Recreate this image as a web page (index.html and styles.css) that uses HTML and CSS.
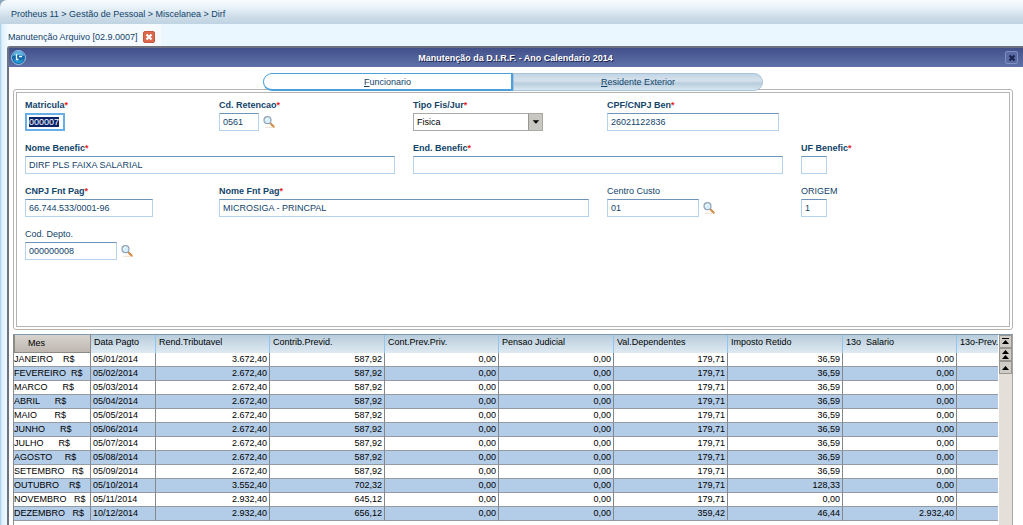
FILE: index.html
```html
<!DOCTYPE html>
<html lang="pt-BR">
<head>
<meta charset="utf-8">
<title>Manutenção da D.I.R.F.</title>
<link rel="stylesheet" href="styles.css">
</head>
<body>
<svg class="defs" aria-hidden="true">
  <symbol id="lens" viewBox="0 0 12 12">
    <path d="M2 11.300h7" stroke="#f0ddd0" stroke-width="1"/>
    <path d="M7 7l3.700 3.700" stroke="#e2954a" stroke-width="2.200" stroke-linecap="round"/>
    <path d="M8 7.200l3 3" stroke="#8a6f5a" stroke-width=".5"/>
    <circle cx="4.500" cy="4.200" r="3.500" fill="#d5effc" stroke="#93a5b5" stroke-width="1.200"/>
    <path d="M2.800 4a2 2 0 0 1 2-1.800" fill="none" stroke="#fff" stroke-width="1"/>
  </symbol>
</svg>
<header class="crumbs">Protheus 11 &gt; Gestão de Pessoal &gt; Miscelanea &gt; Dirf</header>
<div class="desktop">
  <div class="doc-tab">
    <span>Manutenção Arquivo [02.9.0007]</span>
    <button class="doc-close" aria-label="Fechar aba"><svg viewBox="0 0 12 12"><path d="M3.500 3.500l5 5M8.500 3.500l-5 5" stroke="#fff" stroke-width="2.200"/></svg></button>
  </div>
  <main class="window">
    <div class="titlebar">
      <svg class="logo" viewBox="0 0 15 15"><circle cx="7.500" cy="7.500" r="7" fill="#1669a8" stroke="#9fc6e4"/><path d="M2 6a5.500 5 0 0 1 11 0q-5-2-11 0z" fill="#5fb1e0"/><path d="M2.500 9q5 3 10 0-1 4-5 4t-5-4z" fill="#1f9bd5"/><path d="M5.500 4v5.500h2M8 6.500h3" stroke="#e8f8ff" stroke-width="1.300" fill="none"/></svg>
      <h1>Manutenção da D.I.R.F. - Ano Calendario 2014</h1>
      <button class="win-close" aria-label="Fechar"><svg viewBox="0 0 12 12"><path d="M3.500 3.500l5 5M8.500 3.500l-5 5" stroke="#17224f" stroke-width="2"/></svg></button>
    </div>
    <div class="content">
      <div class="tabs" role="tablist">
        <button class="tab active" role="tab" aria-selected="true"><span><u>F</u>uncionario</span></button>
        <button class="tab" role="tab" aria-selected="false"><span><u>R</u>esidente Exterior</span></button>
      </div>
      <form class="panel">
        <div class="field"><label class="req" for="mat">Matricula</label><input class="w40 current" id="mat" value="000007"></div>
        <div class="field"><label class="req" for="ret">Cd. Retencao</label><div class="line"><input class="w40" id="ret" value="0561"><button type="button" class="find" aria-label="Pesquisar retenção"><svg><use href="#lens"/></svg></button></div></div>
        <div class="field"><label class="req" for="tipo">Tipo Fis/Jur</label><div class="combo"><select id="tipo"><option>Fisica</option><option>Juridica</option></select><svg viewBox="0 0 14 16"><path d="M4 6h7l-3.500 4z"/></svg></div></div>
        <div class="field span2"><label class="req" for="cpf">CPF/CNPJ Ben</label><input class="w172" id="cpf" value="26021122836"></div>
        <div class="field span2"><label class="req" for="nome">Nome Benefic</label><input class="w370" id="nome" value="DIRF PLS FAIXA SALARIAL"></div>
        <div class="field span2"><label class="req" for="end">End. Benefic</label><input class="w370" id="end"></div>
        <div class="field"><label class="req" for="uf">UF Benefic</label><input class="w26" id="uf"></div>
        <div class="field"><label class="req" for="cnpj">CNPJ Fnt Pag</label><input class="w128" id="cnpj" value="66.744.533/0001-96"></div>
        <div class="field span2"><label class="req" for="fnt">Nome Fnt Pag</label><input class="w370" id="fnt" value="MICROSIGA - PRINCPAL"></div>
        <div class="field"><label for="cc">Centro Custo</label><div class="line"><input class="w92" id="cc" value="01"><button type="button" class="find" aria-label="Pesquisar centro de custo"><svg><use href="#lens"/></svg></button></div></div>
        <div class="field"><label for="ori">ORIGEM</label><input class="w26" id="ori" value="1"></div>
        <div class="field"><label for="dep">Cod. Depto.</label><div class="line"><input class="w92" id="dep" value="000000008"><button type="button" class="find" aria-label="Pesquisar departamento"><svg><use href="#lens"/></svg></button></div></div>
      </form>
      <div class="grid">
        <div class="grid-view">
        <table>
          <colgroup><col class="c-mes"><col class="c-data"><col class="c-val"><col class="c-val"><col class="c-val"><col class="c-val"><col class="c-val"><col class="c-val"><col class="c-val"><col></colgroup>
          <thead><tr><th>Mes</th><th>Data Pagto</th><th>Rend.Tributavel</th><th>Contrib.Previd.</th><th>Cont.Prev.Priv.</th><th>Pensao Judicial</th><th>Val.Dependentes</th><th>Imposto Retido</th><th>13o&nbsp; Salario</th><th>13o-Prev.</th></tr></thead>
          <tbody>
<tr><th>JANEIRO    R$</th><td>05/01/2014</td><td>3.672,40</td><td>587,92</td><td>0,00</td><td>0,00</td><td>179,71</td><td>36,59</td><td>0,00</td><td></td></tr>
<tr><th>FEVEREIRO  R$</th><td>05/02/2014</td><td>2.672,40</td><td>587,92</td><td>0,00</td><td>0,00</td><td>179,71</td><td>36,59</td><td>0,00</td><td></td></tr>
<tr><th>MARCO      R$</th><td>05/03/2014</td><td>2.672,40</td><td>587,92</td><td>0,00</td><td>0,00</td><td>179,71</td><td>36,59</td><td>0,00</td><td></td></tr>
<tr><th>ABRIL      R$</th><td>05/04/2014</td><td>2.672,40</td><td>587,92</td><td>0,00</td><td>0,00</td><td>179,71</td><td>36,59</td><td>0,00</td><td></td></tr>
<tr><th>MAIO       R$</th><td>05/05/2014</td><td>2.672,40</td><td>587,92</td><td>0,00</td><td>0,00</td><td>179,71</td><td>36,59</td><td>0,00</td><td></td></tr>
<tr><th>JUNHO      R$</th><td>05/06/2014</td><td>2.672,40</td><td>587,92</td><td>0,00</td><td>0,00</td><td>179,71</td><td>36,59</td><td>0,00</td><td></td></tr>
<tr><th>JULHO      R$</th><td>05/07/2014</td><td>2.672,40</td><td>587,92</td><td>0,00</td><td>0,00</td><td>179,71</td><td>36,59</td><td>0,00</td><td></td></tr>
<tr><th>AGOSTO     R$</th><td>05/08/2014</td><td>2.672,40</td><td>587,92</td><td>0,00</td><td>0,00</td><td>179,71</td><td>36,59</td><td>0,00</td><td></td></tr>
<tr><th>SETEMBRO   R$</th><td>05/09/2014</td><td>2.672,40</td><td>587,92</td><td>0,00</td><td>0,00</td><td>179,71</td><td>36,59</td><td>0,00</td><td></td></tr>
<tr><th>OUTUBRO    R$</th><td>05/10/2014</td><td>3.552,40</td><td>702,32</td><td>0,00</td><td>0,00</td><td>179,71</td><td>128,33</td><td>0,00</td><td></td></tr>
<tr><th>NOVEMBRO   R$</th><td>05/11/2014</td><td>2.932,40</td><td>645,12</td><td>0,00</td><td>0,00</td><td>179,71</td><td>0,00</td><td>0,00</td><td></td></tr>
<tr><th>DEZEMBRO   R$</th><td>10/12/2014</td><td>2.932,40</td><td>656,12</td><td>0,00</td><td>0,00</td><td>359,42</td><td>46,44</td><td>2.932,40</td><td></td></tr>
          </tbody>
        </table>
        </div>
        <div class="scroller">
          <button aria-label="Primeiro"><svg viewBox="0 0 12 12"><path d="M2 2h7v1h-7zM5.500 4l3.500 4h-7z"/></svg></button>
          <button aria-label="Página acima"><svg viewBox="0 0 12 12"><path d="M5.500 1l3.500 4h-7zM5.500 6l3.500 4h-7z"/></svg></button>
          <button aria-label="Linha acima"><svg viewBox="0 0 12 12"><path d="M5.500 4l3.500 4h-7z"/></svg></button>
        </div>
      </div>
    </div>
  </main>
</div>
<script src="main.js"></script>
</body>
</html>
```
FILE: main.js
```js
const current = document.getElementById('mat');
current.focus();
current.select();
```
FILE: styles.css
```css
* { box-sizing: border-box; }
html { height: 100%; background: #8aa4b8; }
body {
  margin: 0;
  height: 100%;
  display: flex;
  flex-direction: column;
  overflow: hidden;
  font: 9px/14px "Liberation Sans", Arial, sans-serif;
  color: #12446a;
}
button, input, select { font: inherit; color: inherit; margin: 0; }
button { padding: 0; border: 0; background: none; display: flex; align-items: center; justify-content: center; }
.defs { display: none; }

.crumbs {
  flex: none;
  height: 24px;
  padding: 7px 11px 0;
  border-radius: 7px 0 0 0;
  background: linear-gradient(#f8fcff 0, #eaf3fa 30%, #cddde9 70%, #bfd3e2 100%);
}
.desktop {
  flex: 1;
  min-height: 0;
  display: flex;
  flex-direction: column;
  padding-left: 7px;
  background: linear-gradient(90deg, #a4c8e0 0, #def1fe 2px, #ebf7ff 6px);
}
.doc-tab {
  flex: none;
  align-self: flex-start;
  height: 22px;
  padding: 4px 6px 0 1px;
  display: flex;
  align-items: center;
  gap: 5px;
  background: #f5faff;
}
.doc-close { width: 12px; height: 12px; border-radius: 2px; background: #dd674c; border: 1px solid #c9563e; }
.doc-close svg { width: 12px; height: 12px; flex: none; }

.window {
  flex: 1;
  min-height: 0;
  display: flex;
  flex-direction: column;
  border: solid #6d7180;
  border-width: 2px 0 0 2px;
  border-radius: 3px 0 0 0;
  background: #fff;
}
.titlebar {
  flex: none;
  height: 19px;
  padding: 0 5px 0 2px;
  display: flex;
  align-items: center;
  background: linear-gradient(#42508a, #5f71a8);
}
.titlebar h1 {
  flex: 1;
  margin: 0;
  text-align: center;
  font-size: 9px;
  color: #fff;
  text-shadow: 1px 1px 0 #1c2550;
}
.logo { width: 15px; height: 15px; }
.win-close { width: 13px; height: 13px; border: 1px solid #7f8fc0; border-radius: 2px; background: #5a6ba3; }
.win-close svg { width: 12px; height: 12px; flex: none; }

.content {
  flex: 1;
  min-height: 0;
  display: flex;
  flex-direction: column;
  padding: 6px 10px 0 4px;
}
.tabs { flex: none; display: flex; justify-content: center; height: 16px; }
.tab {
  width: 250px;
  height: 18px;
  z-index: 1;
  border: 1px solid #a9c3d8;
  border-radius: 0 9px 9px 0;
  background: linear-gradient(#c2d5e5, #d5e2ed 40%, #b9cddd 60%, #d9e8f3);
}
.tab.active { border: 1px solid #4ba0dc; border-right-width: 2px; border-bottom-width: 2px; border-radius: 9px 0 0 9px; background: #fff; }

.panel {
  flex: none;
  min-height: 241px;
  padding: 5px 8px;
  border: 4px double #b4b4b4;
  border-radius: 3px;
  display: grid;
  grid-template-columns: repeat(5, 194px);
  grid-auto-rows: 43px;
  align-content: start;
}
.span2 { grid-column: span 2; }
.field label { display: block; height: 15px; line-height: 14px; }
.req { font-weight: bold; }
.req::after { content: "*"; color: #f02222; }
.line { display: flex; align-items: center; gap: 4px; }
.field input {
  display: block;
  height: 18px;
  padding: 0 3px;
  border: 1px solid #b5d3ee;
  border-top-color: #6e93b8;
  background: #fff;
  outline: 0;
}
.field .current { padding: 0 2px; border: 2px solid #68aee8; }
.current::selection { background: #0a246a; color: #fff; }
.w26 { width: 26px; }
.w40 { width: 40px; }
.w92 { width: 92px; }
.w128 { width: 128px; }
.w172 { width: 172px; }
.w370 { width: 370px; }
.find svg { width: 12px; height: 12px; }
.combo { position: relative; width: 130px; }
.combo select {
  appearance: none;
  display: block;
  width: 100%;
  height: 18px;
  padding: 0 3px;
  border: 1px solid #aaa9a4;
  border-radius: 0;
  background: #fff;
  color: #000;
}
.combo svg { position: absolute; top: 1px; right: 1px; width: 14px; height: 16px; background: #c9c7c2; border-left: 1px solid #97958f; pointer-events: none; }

.grid { flex: 1 0 auto; display: flex; margin-top: 4px; border-top: 1px solid #7e99ad; border-left: 1px solid #8c8c8c; color: #000; }
.grid-view { flex: 1; min-width: 0; overflow: hidden; }
table { width: 100%; table-layout: fixed; border-collapse: separate; border-spacing: 0; }
.c-mes { width: 77px; }
.c-data { width: 65px; }
.c-val { width: 114px; }
.c-val:nth-child(even) { width: 115px; }
th, td { padding: 0 2px; white-space: pre; overflow: hidden; line-height: 13px; }
thead th {
  height: 18px;
  padding: 0 3px 4px;
  font-weight: normal;
  text-align: left;
  border-right: 1px solid #8fc5ee;
  background: linear-gradient(#b8ccdb, #dfeaf2);
}
thead th:first-child { padding: 0 0 0 13px; border: 1px solid #8d8984; border-top: 0; background: linear-gradient(#d8d3cd, #bdb7b0); }
tbody th, tbody td { height: 14px; border-bottom: 1px solid #939aa2; border-right: 1px solid #84888d; text-align: right; }
tbody th { padding: 0; font-weight: normal; text-align: left; }
tbody td:nth-child(2) { text-align: left; }
tbody tr:nth-child(even) { background: #b3cce8; }
tbody td:last-child, thead th:last-child { border-right: 0; }
.scroller { flex: none; width: 14px; background: #e4e0d9; border-right: 1px solid #a9a6a1; margin-left: 1px; }
.scroller button { width: 13px; height: 13px; background: #d0cdc7; border: 1px solid #99968f; }
.scroller svg { width: 12px; height: 12px; flex: none; }
```
